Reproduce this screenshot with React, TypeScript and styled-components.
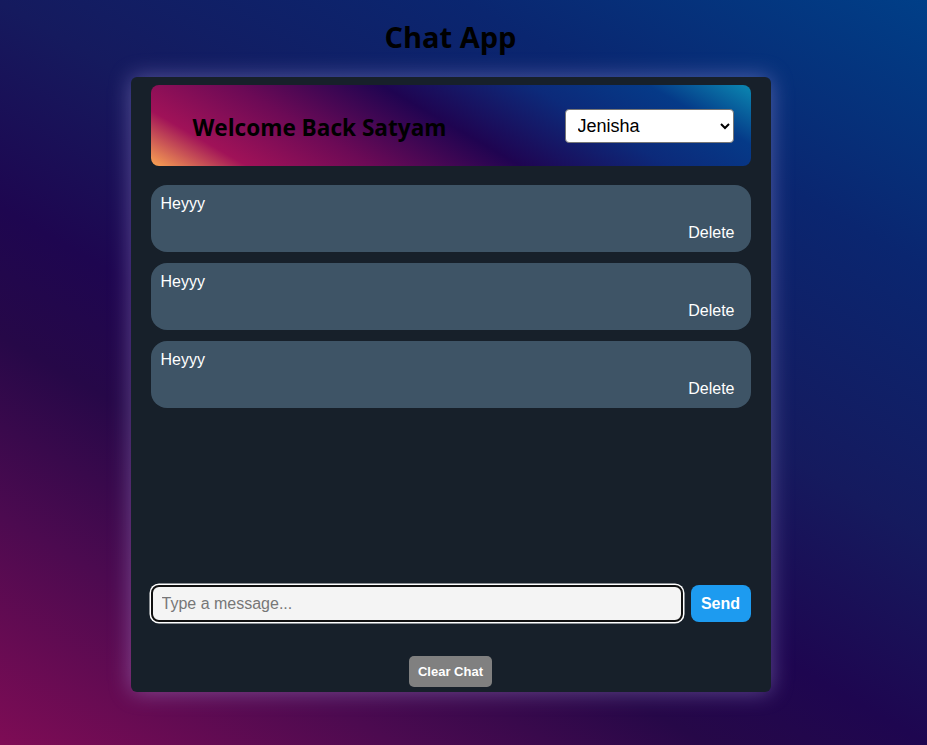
import React from "react";
import styled, { createGlobalStyle } from "styled-components";

const GlobalStyle = createGlobalStyle`
  html, body {
    margin: 0;
    padding: 0;
    min-height: 100%;
  }
  body {
    min-height: 745px;
    font-family: "Liberation Sans", Arial, sans-serif;
    background: linear-gradient(30deg, #7e0c55 0%, #4c0a50 18%, #260848 32%, #1e0650 42%, #151a5e 58%, #0a2670 79%, #003f88 100%);
    background-attachment: fixed;
  }
`;

const Page = styled.div`
  display: flex;
  flex-direction: column;
  align-items: center;
  padding: 15px 26px 0 0;
  min-height: 745px;
  box-sizing: border-box;
`;

const Title = styled.h1`
  margin: 0 0 19px;
  font-family: "Open Sans", "Noto Sans", sans-serif;
  font-weight: 700;
  font-size: 29px;
  line-height: 43px;
  color: #000;
`;

const Card = styled.div`
  width: 640px;
  height: 615px;
  box-sizing: border-box;
  padding: 8px 20px 5px;
  background: #17202a;
  border-radius: 6px;
  box-shadow: 0 0 22px rgba(200, 185, 255, 0.38);
  display: flex;
  flex-direction: column;
`;

const Header = styled.div`
  height: 81px;
  flex: none;
  display: flex;
  align-items: center;
  justify-content: space-between;
  padding: 0 17px 0 42px;
  border-radius: 8px;
  background: linear-gradient(30deg, #fba552 0%, #a01258 13%, #6c0a56 30%, #1f0451 50%, #0c2a7a 70%, #053a88 86%, #0b88b2 100%);
`;

const Welcome = styled.h2`
  margin: 3px 0 0;
  font-family: "Open Sans", "Noto Sans", sans-serif;
  font-weight: 700;
  font-size: 22.6px;
  color: #000;
`;

const UserSelect = styled.select`
  flex: none;
  width: 169px;
  height: 34px;
  font-family: "Liberation Sans", Arial, sans-serif;
  font-size: 18px;
  padding: 0 8px;
  border: 1px solid #767676;
  border-radius: 4px;
  background: #fff;
  color: #000;
`;

const Messages = styled.div`
  flex: 1;
  display: flex;
  flex-direction: column;
  gap: 11px;
  margin-top: 19px;
`;

const Bubble = styled.div`
  display: flex;
  flex-direction: column;
  padding: 10px 16px 10px 10px;
  border-radius: 16px;
  background: #3e5466;
  color: #fff;
  font-size: 16px;
`;

const BubbleText = styled.div`
  line-height: 18px;
`;

const DeleteButton = styled.button`
  align-self: flex-end;
  margin-top: 11px;
  padding: 0;
  border: none;
  background: transparent;
  color: #fff;
  font-family: "Liberation Sans", Arial, sans-serif;
  font-size: 16px;
  line-height: 18px;
  cursor: pointer;
`;

const InputRow = styled.div`
  display: flex;
  align-items: center;
  gap: 8px;
  margin-bottom: 32px;
`;

const MessageInput = styled.input`
  flex: 1;
  height: 37px;
  box-sizing: border-box;
  margin: 2px 0;
  padding: 0 9px;
  border: 2px solid #111;
  border-radius: 8px;
  box-shadow: 0 0 0 1.5px #fff;
  background: #f4f4f4;
  font-family: "Liberation Sans", Arial, sans-serif;
  font-size: 16px;
  color: #000;
  outline: none;
  &::placeholder {
    color: #777;
  }
`;

const SendButton = styled.button`
  flex: none;
  width: 60px;
  height: 37px;
  border: none;
  border-radius: 8px;
  background: #1d9bf0;
  color: #fff;
  font-family: "Liberation Sans", Arial, sans-serif;
  font-weight: 700;
  font-size: 16px;
  cursor: pointer;
`;

const ClearButton = styled.button`
  align-self: center;
  width: 83px;
  height: 31px;
  border: none;
  border-radius: 5px;
  background: #808080;
  color: #fff;
  font-family: "Liberation Sans", Arial, sans-serif;
  font-weight: 700;
  font-size: 13px;
  cursor: pointer;
`;

const messages = ["Heyyy", "Heyyy", "Heyyy"];

export default function App() {
  return (
    <>
      <GlobalStyle />
      <Page>
        <Title>Chat App</Title>
        <Card>
          <Header>
            <Welcome>Welcome Back Satyam</Welcome>
            <UserSelect defaultValue="Jenisha">
              <option>Jenisha</option>
              <option>Satyam</option>
            </UserSelect>
          </Header>
          <Messages>
            {messages.map((m, i) => (
              <Bubble key={i}>
                <BubbleText>{m}</BubbleText>
                <DeleteButton>Delete</DeleteButton>
              </Bubble>
            ))}
          </Messages>
          <InputRow>
            <MessageInput placeholder="Type a message..." />
            <SendButton>Send</SendButton>
          </InputRow>
          <ClearButton>Clear Chat</ClearButton>
        </Card>
      </Page>
    </>
  );
}
